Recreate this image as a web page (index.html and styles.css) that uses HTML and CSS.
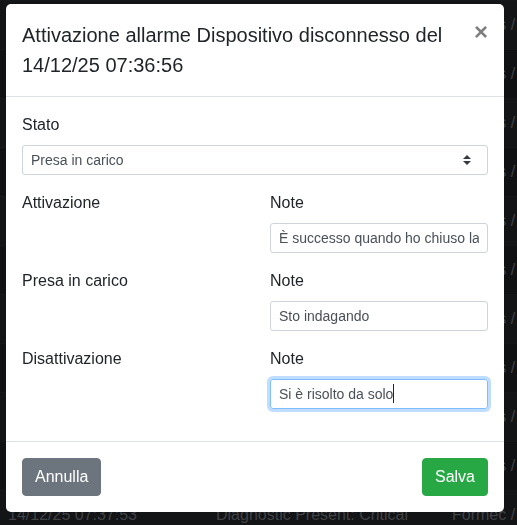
FILE: index.html
```html
<!DOCTYPE html>
<html lang="it">
<head>
<meta charset="utf-8">
<title>Allarme</title>
<link rel="stylesheet" href="styles.css">
</head>
<body>
<div class="bg-table">
  <div class="bg-row"><span>14/12/25 07:50:12</span><span>Dispositivo disconnesso</span><span>Formes /</span></div>
  <div class="bg-row"><span>14/12/25 07:48:40</span><span>Diagnostic Present: Warning</span><span>Formes /</span></div>
  <div class="bg-row"><span>14/12/25 07:47:05</span><span>Dispositivo disconnesso</span><span>Formes /</span></div>
  <div class="bg-row"><span>14/12/25 07:45:31</span><span>Diagnostic Present: Critical</span><span>Formes /</span></div>
  <div class="bg-row"><span>14/12/25 07:44:18</span><span>Dispositivo disconnesso</span><span>Formes /</span></div>
  <div class="bg-row"><span>14/12/25 07:42:57</span><span>Diagnostic Present: Warning</span><span>Formes /</span></div>
  <div class="bg-row"><span>14/12/25 07:41:22</span><span>Dispositivo disconnesso</span><span>Formes /</span></div>
  <div class="bg-row"><span>14/12/25 07:40:09</span><span>Diagnostic Present: Critical</span><span>Formes /</span></div>
  <div class="bg-row"><span>14/12/25 07:39:44</span><span>Dispositivo disconnesso</span><span>Formes /</span></div>
  <div class="bg-row"><span>14/12/25 07:38:10</span><span>Diagnostic Present: Warning</span><span>Formes /</span></div>
  <div class="bg-row"><span>14/12/25 07:37:53</span><span>Diagnostic Present: Critical</span><span>Formec /</span></div>
</div>

<div class="modal">
  <div class="modal-content">
    <div class="modal-header">
      <h5 class="modal-title">Attivazione allarme Dispositivo disconnesso del 14/12/25 07:36:56</h5>
      <button class="close" type="button" aria-label="Close">×</button>
    </div>
    <div class="modal-body">
      <div class="form-group">
        <label class="label">Stato</label>
        <div class="select">
          <span>Presa in carico</span>
          <svg class="select-arrow" width="8" height="10" viewBox="0 0 4 5"><path d="M2 0L0 2h4zm0 5L0 3h4z" fill="#343a40"/></svg>
        </div>
      </div>
      <div class="grid-row">
        <div class="label">Attivazione</div>
        <div class="form-group">
          <label class="label">Note</label>
          <div class="field"><span class="field-text">È successo quando ho chiuso la</span></div>
        </div>
      </div>
      <div class="grid-row">
        <div class="label">Presa in carico</div>
        <div class="form-group">
          <label class="label">Note</label>
          <div class="field"><span class="field-text">Sto indagando</span></div>
        </div>
      </div>
      <div class="grid-row">
        <div class="label">Disattivazione</div>
        <div class="form-group">
          <label class="label">Note</label>
          <div class="field field-focus"><span class="field-text">Si è risolto da solo<span class="caret"></span></span></div>
        </div>
      </div>
    </div>
    <div class="modal-footer">
      <button class="btn btn-secondary" type="button">Annulla</button>
      <button class="btn btn-success" type="button">Salva</button>
    </div>
  </div>
</div>
</body>
</html>
```

FILE: styles.css
```css
* { box-sizing: border-box; }

html, body {
  margin: 0;
  padding: 0;
  height: 100%;
  overflow: hidden;
}

body {
  background: #0b0c0d;
  font-family: "Liberation Sans", Arial, sans-serif;
  font-size: 16px;
  line-height: 24px;
  color: #212529;
}

.bg-table {
  display: flex;
  flex-direction: column;
}

.bg-row {
  display: grid;
  grid-template-columns: 208px 236px minmax(0, 1fr);
  height: 49px;
  padding: 12px 0 12px 8px;
  border-top: 1px solid #161719;
  background: #101113;
  color: #404246;
  white-space: nowrap;
  overflow: hidden;
}

.bg-row span {
  overflow: hidden;
}

.bg-row:nth-child(odd) {
  background: #131416;
}

.modal {
  position: fixed;
  left: 6px;
  top: 4px;
  width: 498px;
}

.modal-content {
  background: #fff;
  border-radius: 5px;
  overflow: hidden;
}

.modal-header {
  display: flex;
  align-items: flex-start;
  padding: 16px;
  border-bottom: 1px solid #dee2e6;
}

.modal-title {
  margin: 0;
  font-size: 20px;
  line-height: 30px;
  font-weight: 500;
  color: #212529;
}

.close {
  margin: -16px -16px -16px auto;
  padding: 16px;
  border: 0;
  background: transparent;
  font-family: "Liberation Sans", Arial, sans-serif;
  font-size: 24px;
  line-height: 24px;
  font-weight: 700;
  color: #000;
  opacity: 0.5;
  text-shadow: 0 1px 0 #fff;
}

.modal-body {
  padding: 16px;
}

.form-group {
  margin-bottom: 16px;
  min-width: 0;
}

.label {
  display: block;
  margin-bottom: 8px;
  line-height: 24px;
}

.select {
  display: flex;
  align-items: center;
  justify-content: space-between;
  height: 30px;
  padding: 0 16px 0 8px;
  border: 1px solid #ced4da;
  border-radius: 3px;
  font-size: 14px;
  color: #495057;
}

.select-arrow {
  display: block;
}

.grid-row {
  display: grid;
  grid-template-columns: minmax(0, 1fr) minmax(0, 1fr);
  column-gap: 30px;
}

.field {
  height: 30px;
  padding: 0 8px;
  border: 1px solid #ced4da;
  border-radius: 3px;
  font-size: 14px;
  line-height: 28px;
  color: #495057;
  display: flex;
  min-width: 0;
}

.field-text {
  flex: 1;
  min-width: 0;
  overflow: hidden;
  white-space: nowrap;
}

.field-focus {
  border-color: #80bdff;
  box-shadow: 0 0 0 3px rgba(0, 123, 255, 0.25);
}

.caret {
  display: inline-block;
  width: 1px;
  height: 19px;
  background: #212529;
  vertical-align: -4px;
}

.modal-footer {
  display: flex;
  justify-content: space-between;
  align-items: center;
  padding: 16px;
  border-top: 1px solid #dee2e6;
}

.btn {
  height: 38px;
  padding: 6px 12px;
  border: 1px solid transparent;
  border-radius: 4px;
  font-family: "Liberation Sans", Arial, sans-serif;
  font-size: 16px;
  line-height: 24px;
  color: #fff;
}

.btn-secondary {
  background: #6c757d;
  border-color: #6c757d;
}

.btn-success {
  background: #28a745;
  border-color: #28a745;
}
```
